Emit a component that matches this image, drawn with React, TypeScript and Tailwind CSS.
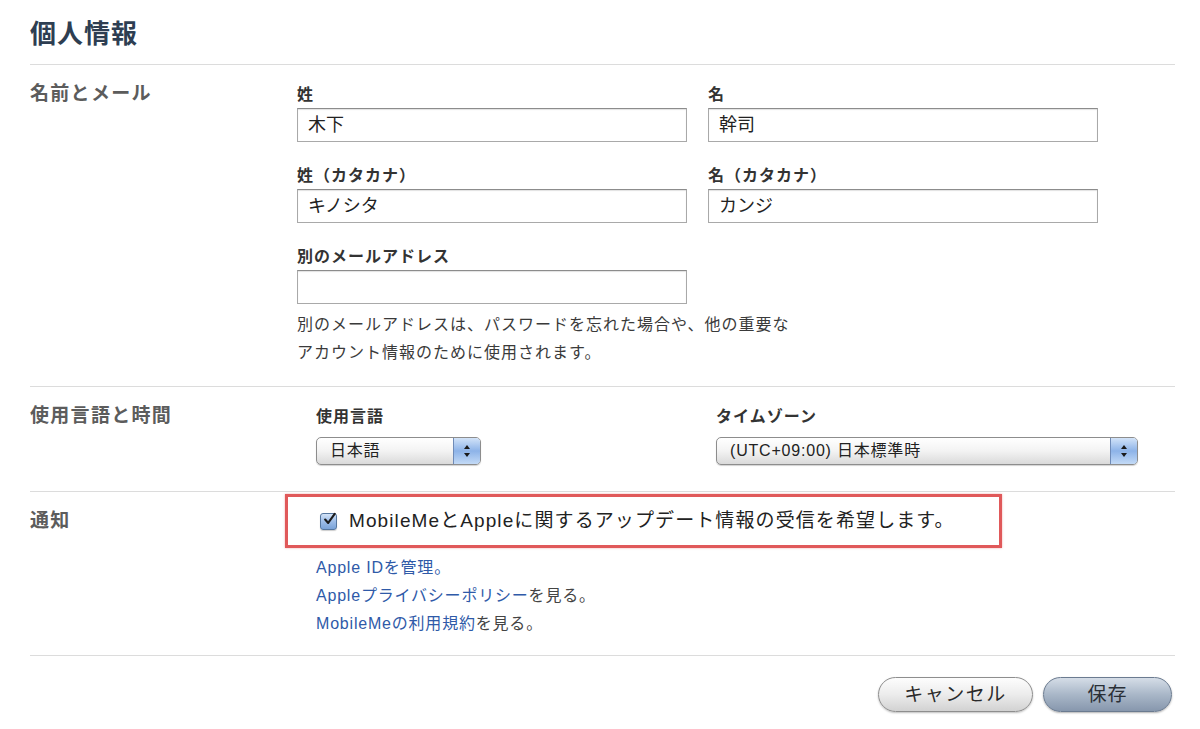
import React from 'react'

const FONT = "font-['Liberation_Sans','Noto_Sans_CJK_JP',sans-serif]"

function Field({ label, value }: { label: string; value?: string }) {
  return (
    <div className="flex flex-col">
      <div className="h-[20px] text-[16px] leading-[20px] font-bold tracking-[1px] text-[#333] mb-[3px]">{label}</div>
      <div className="h-[34px] w-[390px] border border-[#a9a9a9] border-t-[#8c8c8c] bg-white pl-[10px] text-[18px] leading-[32px] text-[#222] shadow-[inset_0_1px_1px_rgba(0,0,0,0.12)]">
        {value}
      </div>
    </div>
  )
}

function Stepper() {
  return (
    <div className="flex w-[27px] items-center justify-center rounded-r-[4px] border-l border-[#6f8bb8] bg-gradient-to-b from-[#d2e3f8] via-[#8db3e8] to-[#c3daf6]">
      <svg width="8" height="14" viewBox="0 0 8 14">
        <path d="M4 1 L7 5 L1 5 Z" fill="#1a1a1a" />
        <path d="M4 13 L7 9 L1 9 Z" fill="#1a1a1a" />
      </svg>
    </div>
  )
}

function AquaSelect({ value, className }: { value: string; className: string }) {
  return (
    <div
      className={`flex h-[28px] rounded-[5px] border border-[#8d8d8d] bg-gradient-to-b from-white via-[#f3f3f3] to-[#dadada] shadow-[0_1px_1px_rgba(0,0,0,0.18)] ${className}`}
    >
      <div className="flex-1 pl-[13px] text-[16px] leading-[26px] tracking-[0.8px] text-[#222]">{value}</div>
      <Stepper />
    </div>
  )
}

function Checkbox() {
  return (
    <div className="flex h-[17px] w-[17px] items-center justify-center rounded-[3px] border border-[#56779f] bg-gradient-to-b from-[#d3e3f7] via-[#9dbde8] to-[#7aa3d8] shadow-[0_1px_1px_rgba(0,0,0,0.2)]">
      <svg width="15" height="15" viewBox="0 0 15 15" className="-mt-[3px] ml-[2px]">
        <path d="M2.5 7.5 L6 11.5 L13.5 1" fill="none" stroke="#1b1b1b" strokeWidth="2.4" strokeLinecap="round" strokeLinejoin="round" />
      </svg>
    </div>
  )
}

export default function App() {
  return (
    <div className={`${FONT} min-h-[729px] w-[1200px] bg-white pl-[30px] pr-[25px]`}>
      {/* header */}
      <div className="h-[65px] border-b border-[#dcdcdc] pt-[18px]">
        <h1 className="text-[26px] leading-[32px] font-bold tracking-[1px] text-[#2e3e52]">個人情報</h1>
      </div>

      {/* name and mail */}
      <div className="grid grid-cols-[267px_1fr] border-b border-[#dcdcdc] pt-[20px] pb-[19px]">
        <div className="text-[19px] leading-[18px] font-bold tracking-[1.3px] text-[#5c5c5c]">名前とメール</div>
        <div>
          <div className="grid grid-cols-[390px_390px] gap-x-[21px] gap-y-[24px]">
            <Field label="姓" value="木下" />
            <Field label="名" value="幹司" />
            <Field label="姓（カタカナ）" value="キノシタ" />
            <Field label="名（カタカナ）" value="カンジ" />
            <Field label="別のメールアドレス" />
          </div>
          <p className="mt-[7px] text-[16px] leading-[28px] tracking-[1px] text-[#3a3a3a]">
            別のメールアドレスは、パスワードを忘れた場合や、他の重要な
            <br />
            アカウント情報のために使用されます。
          </p>
        </div>
      </div>

      {/* language and time */}
      <div className="grid grid-cols-[267px_1fr] border-b border-[#dcdcdc] pt-[20px] pb-[26px]">
        <div className="text-[19px] leading-[18px] font-bold tracking-[1.3px] text-[#5c5c5c]">使用言語と時間</div>
        <div className="grid grid-cols-[400px_422px] pl-[19px]">
          <div>
            <div className="h-[20px] text-[16px] leading-[20px] font-bold tracking-[1px] text-[#333]">使用言語</div>
            <AquaSelect value="日本語" className="mt-[10px] w-[165px]" />
          </div>
          <div>
            <div className="h-[20px] text-[16px] leading-[20px] font-bold tracking-[1px] text-[#333]">タイムゾーン</div>
            <AquaSelect value="(UTC+09:00) 日本標準時" className="mt-[10px] w-[422px]" />
          </div>
        </div>
      </div>

      {/* notification */}
      <div className="grid grid-cols-[267px_1fr] border-b border-[#dcdcdc] pb-[17px]">
        <div className="pt-[20px] text-[19px] leading-[18px] font-bold tracking-[1.3px] text-[#5c5c5c]">通知</div>
        <div>
          <div className="mt-[2px] ml-[-12px] flex h-[54px] w-[717px] items-center border-[3px] border-[#e0595a] pl-[32px] shadow-[0_0_2px_rgba(224,89,90,0.5)]">
            <Checkbox />
            <span className="ml-[12px] text-[19px] leading-[24px] tracking-[1.1px] text-[#222]">
              MobileMeとAppleに関するアップデート情報の受信を希望します。
            </span>
          </div>
          <div className="mt-[6px] pl-[19px] text-[16px] leading-[28px] tracking-[0.8px] text-[#444]">
            <div>
              <a className="text-[#2f5aa8]">Apple IDを管理。</a>
            </div>
            <div>
              <a className="text-[#2f5aa8]">Appleプライバシーポリシー</a>を見る。
            </div>
            <div>
              <a className="text-[#2f5aa8]">MobileMeの利用規約</a>を見る。
            </div>
          </div>
        </div>
      </div>

      {/* footer */}
      <div className="flex justify-end gap-[10px] pt-[21px] pr-[3px]">
        <button className="h-[35px] w-[155px] rounded-full border border-[#8e8e8e] bg-gradient-to-b from-[#fdfdfd] via-[#ececec] to-[#d2d2d2] text-[19px] leading-[33px] tracking-[1.5px] text-[#2a2a2a] shadow-[0_1px_2px_rgba(0,0,0,0.25)]">
          キャンセル
        </button>
        <button className="h-[35px] w-[129px] rounded-full border border-[#6b7b90] bg-gradient-to-b from-[#d5dde7] via-[#a9b7c8] to-[#8797ad] text-[19px] leading-[33px] tracking-[1px] text-[#2a2f36] shadow-[0_1px_2px_rgba(0,0,0,0.3)]">
          保存
        </button>
      </div>
    </div>
  )
}
